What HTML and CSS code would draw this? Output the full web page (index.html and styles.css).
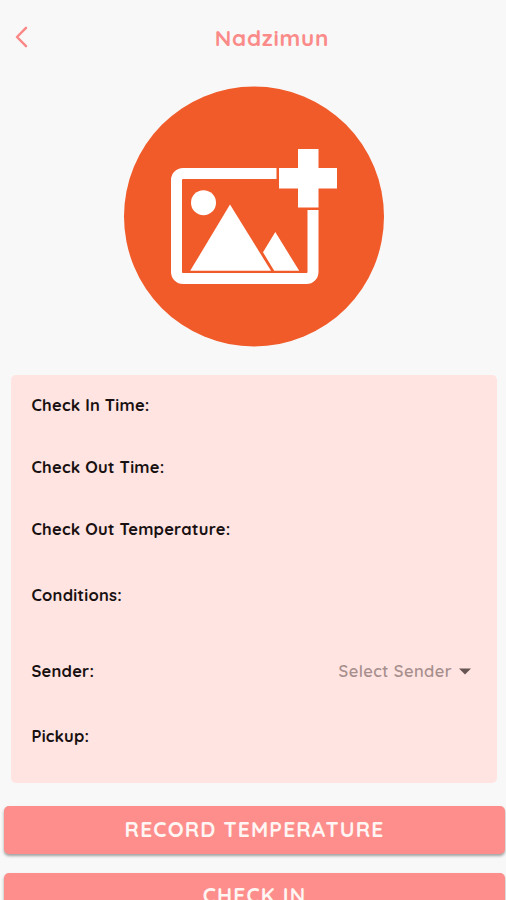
FILE: index.html
```html
<!DOCTYPE html>
<html lang="en">
<head>
<meta charset="utf-8">
<title>Nadzimun</title>
<link rel="stylesheet" href="styles.css">
</head>
<body>
<header class="topbar">
  <svg class="back" viewBox="0 0 16 24" aria-hidden="true"><path d="M13 2.800 4 12l9 9.200"/></svg>
  <h1 class="title">Nadzimun</h1>
</header>
<main>
  <svg class="photo" viewBox="124 86 260 261" aria-hidden="true">
    <circle class="disc" cx="254" cy="216.5" r="130"/>
    <path class="frame" d="M276.500 173.500H183a6.500 6.500 0 0 0-6.500 6.500v92a6.500 6.500 0 0 0 6.500 6.500h123.500a6.500 6.500 0 0 0 6.500-6.500V210"/>
    <g class="shape">
      <circle cx="203.500" cy="202.700" r="12.500"/>
      <path d="M230 204.500 190.200 270.800H271z"/>
      <path d="M275.300 232 263 252.300l11.200 18.500h25z"/>
      <path d="M298 149h20.500v19H337v20.500h-18.500v19H298v-19h-19V168h19z"/>
    </g>
  </svg>
  <section class="card">
    <div class="row in-time"><span class="label">Check In Time:</span></div>
    <div class="row out-time"><span class="label">Check Out Time:</span></div>
    <div class="row out-temp"><span class="label">Check Out Temperature:</span></div>
    <div class="row conditions"><span class="label">Conditions:</span></div>
    <div class="row sender">
      <span class="label">Sender:</span>
      <span class="select"><span class="placeholder">Select Sender</span><svg class="caret" viewBox="0 0 12 7" aria-hidden="true"><path d="M0 .5h12L6 6.500z"/></svg></span>
    </div>
    <div class="row pickup"><span class="label">Pickup:</span></div>
  </section>
  <div class="actions">
    <button class="btn record">Record Temperature</button>
    <button class="btn checkin">Check In</button>
  </div>
</main>
</body>
</html>
```
FILE: styles.css
```css
* { box-sizing: border-box; }
html { height: 100%; overflow: hidden; }
body {
  margin: 0;
  height: 900px;
  overflow: hidden;
  background: #f8f8f8;
  font-family: Quicksand, Lato, "Liberation Sans", sans-serif;
  color: #181011;
}
.topbar {
  display: grid;
  grid-template-columns: 38px 1fr;
  align-items: center;
  height: 76px;
  padding: 0 0 2px 13px;
}
.back { width: 16px; height: 24px; }
.back path {
  fill: none;
  stroke: #fa8886;
  stroke-width: 2.5;
  stroke-linecap: round;
  stroke-linejoin: round;
}
.title {
  margin: 1px 0 0;
  padding-right: 13px;
  text-align: center;
  color: #fb8b89;
  font-size: 22.5px;
  line-height: 30px;
  font-weight: 700;
  letter-spacing: .75px;
}
.photo { display: block; width: 260px; height: 261px; margin: 10px 0 0 124px; }
.disc { fill: #f15a29; }
.frame { fill: none; stroke: #fff; stroke-width: 11; }
.shape { fill: #fff; }
.card {
  display: grid;
  grid-template-rows: 60px 64px 60px 72px 82px 46px;
  height: 408px;
  margin: 28px 9px 0 11px;
  padding: 0 26px 0 20.5px;
  border-radius: 5px;
  background: #ffe4e1;
}
.row { display: flex; align-items: center; justify-content: space-between; }
.sender { padding-bottom: 2px; }
.label, .placeholder { font-size: 16.5px; line-height: 22px; }
.label { font-weight: 700; letter-spacing: .22px; }
.placeholder { color: #a78f8e; font-weight: 600; letter-spacing: .4px; }
.select { display: flex; align-items: center; gap: 7px; }
.caret { width: 12px; height: 7px; fill: #675554; }
.actions { display: grid; gap: 19px; margin: 23px 1px 0 4px; }
.btn {
  height: 48px;
  padding: 0 0 2px;
  border: 0;
  border-radius: 5px;
  background: #fd8e8c;
  box-shadow: 0 2px 3px rgba(0, 0, 0, .36);
  color: #fff5f3;
  font: inherit;
  font-size: 21px;
  line-height: 28px;
  font-weight: 700;
  letter-spacing: 1.15px;
  text-transform: uppercase;
}
.checkin { padding-bottom: 4px; }
```
